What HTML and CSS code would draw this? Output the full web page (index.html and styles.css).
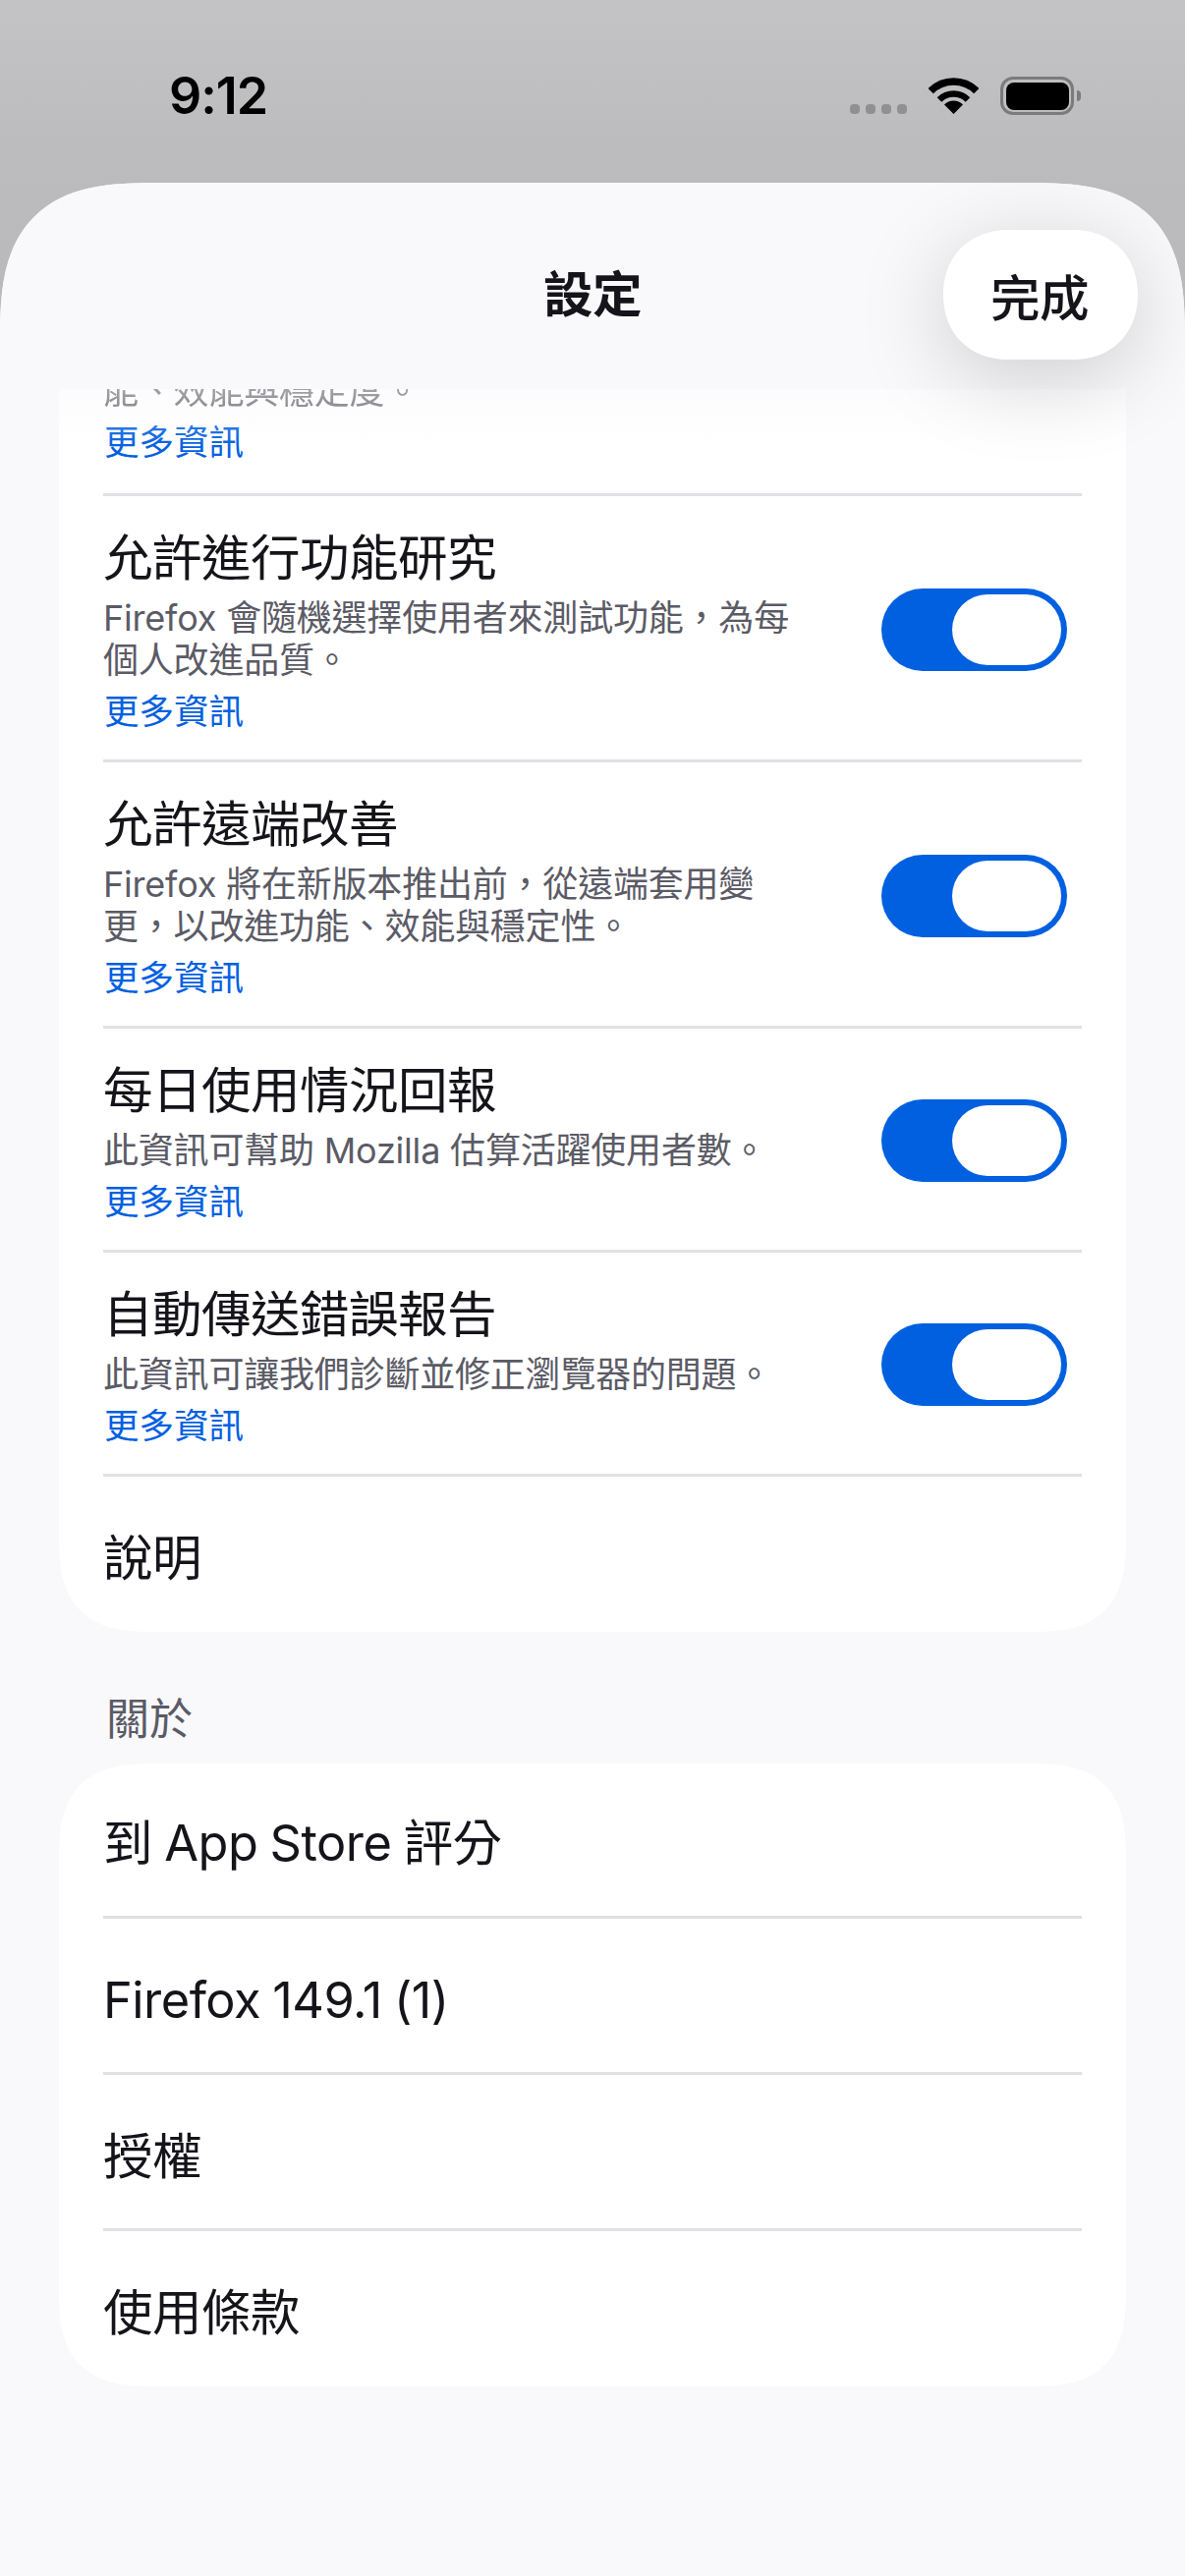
FILE: index.html
```html
<!DOCTYPE html>
<html lang="zh-Hant">
<head>
<meta charset="utf-8">
<title>設定</title>
<link rel="stylesheet" href="styles.css">
</head>
<body>
<div class="phone">
  <div class="status">
    <span class="time">9:12</span>
    <div class="status-icons">
      <div class="signal"><i></i><i></i><i></i><i></i></div>
      <svg class="wifi" viewBox="0 0 51 37" width="51" height="37">
        <path d="M2.2 13.7A33 33 0 0 1 48.8 13.7" fill="none" stroke="#000" stroke-width="7.5"/>
        <path d="M11 22.5A20.5 20.5 0 0 1 40 22.5" fill="none" stroke="#000" stroke-width="6.5"/>
        <path d="M25.5 37L16 27.5A13.4 13.4 0 0 1 35 27.5Z" fill="#000"/>
      </svg>
      <div class="battery"><div class="battery-body"><div class="battery-fill"></div></div><div class="battery-nub"></div></div>
    </div>
  </div>
  <div class="sheet">
    <header class="nav">
      <h1 class="nav-title">設定</h1>
      <button class="done">完成</button>
    </header>
    <div class="nav-fade"></div>
    <main class="scroll">
      <section class="card first">
        <div class="row">
          <div class="text">
            <p class="sub blurred">能、效能與穩定度。</p>
            <a class="link">更多資訊</a>
          </div>
        </div>
        <div class="row split">
          <div class="text">
            <div class="title">允許進行功能研究</div>
            <p class="sub">Firefox 會隨機選擇使用者來測試功能，為每<br>個人改進品質。</p>
            <a class="link">更多資訊</a>
          </div>
          <div class="toggle"><div class="knob"></div></div>
        </div>
        <div class="row split">
          <div class="text">
            <div class="title">允許遠端改善</div>
            <p class="sub">Firefox 將在新版本推出前，從遠端套用變<br>更，以改進功能、效能與穩定性。</p>
            <a class="link">更多資訊</a>
          </div>
          <div class="toggle"><div class="knob"></div></div>
        </div>
        <div class="row split">
          <div class="text">
            <div class="title">每日使用情況回報</div>
            <p class="sub">此資訊可幫助 Mozilla 估算活躍使用者數。</p>
            <a class="link">更多資訊</a>
          </div>
          <div class="toggle"><div class="knob"></div></div>
        </div>
        <div class="row split">
          <div class="text">
            <div class="title">自動傳送錯誤報告</div>
            <p class="sub">此資訊可讓我們診斷並修正瀏覽器的問題。</p>
            <a class="link">更多資訊</a>
          </div>
          <div class="toggle"><div class="knob"></div></div>
        </div>
        <div class="row plain">說明</div>
      </section>
      <h2 class="section-label">關於</h2>
      <section class="card">
        <div class="row plain">到 App Store 評分</div>
        <div class="row plain">Firefox 149.1 (1)</div>
        <div class="row plain">授權</div>
        <div class="row plain">使用條款</div>
      </section>
    </main>
  </div>
</div>
</body>
</html>
```

FILE: styles.css
```css
* { box-sizing: border-box; }
html, body { margin: 0; padding: 0; }
body {
  font-family: Inter, "Noto Sans CJK TC", sans-serif;
  color: #15141a;
}
.phone {
  width: 1206px;
  height: 2622px;
  display: flex;
  flex-direction: column;
  overflow: hidden;
  background: linear-gradient(#c3c3c5 0, #bbbbbd 186px, #b9b9bb 330px);
}
.status {
  height: 186px;
  flex: none;
  display: flex;
  justify-content: space-between;
  padding: 68px 106px 0 172px;
  align-items: flex-start;
}
.time {
  font-size: 52px;
  line-height: 60px;
  font-weight: 600;
  letter-spacing: -1px;
  color: #000;
}
.status-icons {
  display: flex;
  align-items: flex-start;
  padding-top: 10px;
}
.signal {
  display: flex;
  gap: 6px;
  margin-top: 28px;
  margin-right: 22px;
}
.signal i {
  display: block;
  width: 10px;
  height: 10px;
  border-radius: 4px;
  background: #909092;
}
.wifi { display: block; margin-top: 1px; margin-right: 22px; }
.battery { display: flex; align-items: center; }
.battery-body {
  width: 75px;
  height: 39px;
  border: 3.5px solid #7b7b7d;
  border-radius: 13px;
  padding: 2.5px;
}
.battery-fill {
  width: 100%;
  height: 100%;
  background: #000;
  border-radius: 8px;
}
.battery-nub {
  width: 4px;
  height: 11px;
  margin-left: 3px;
  background: #7b7b7d;
  border-radius: 0 4px 4px 0;
}
.sheet {
  flex: 1;
  position: relative;
  background: #f9f9fb;
  border-radius: 160px 160px 0 0;
  corner-shape: superellipse(1.5);
  overflow: hidden;
}
.nav {
  position: absolute;
  top: 0;
  left: 0;
  right: 0;
  height: 210px;
  background: #f9f9fb;
  z-index: 3;
}
.nav-title {
  margin: 0;
  position: absolute;
  left: 0;
  right: 0;
  top: 84px;
  text-align: center;
  font-size: 50.5px;
  letter-spacing: -0.5px;
  line-height: 60px;
  font-weight: 600;
}
.done {
  position: absolute;
  top: 48px;
  right: 48px;
  width: 198px;
  height: 132px;
  border: 0;
  border-radius: 66px;
  corner-shape: superellipse(1.1);
  background: #fff;
  box-shadow: 0 18px 90px rgba(0, 0, 0, 0.18);
  font: inherit;
  font-size: 50.5px;
  letter-spacing: -0.5px;
  font-weight: 500;
  color: #15141a;
  padding: 0 2px 0 0;
}
.nav-fade {
  position: absolute;
  top: 210px;
  left: 0;
  right: 0;
  height: 60px;
  z-index: 2;
  background: linear-gradient(rgba(249, 249, 251, 0.45), rgba(249, 249, 251, 0));
}
.scroll {
  padding: 191px 60px 0;
}
.card {
  background: #fff;
  border-radius: 100px;
  corner-shape: superellipse(1.5);
  padding: 0 45px;
}
.card.first {
  border-radius: 0 0 100px 100px;
}
.row {
  border-top: 3px solid #e0e0e6;
  padding: 33px 0 27px;
}
.row:first-child {
  border-top: 0;
  padding-top: 0;
  padding-bottom: 30px;
}
.split {
  display: flex;
  justify-content: space-between;
  align-items: center;
  padding-right: 15px;
}
.title {
  font-size: 50.5px;
  letter-spacing: -0.5px;
  word-spacing: -1.5px;
  line-height: 60px;
  margin-bottom: 10px;
}
.sub {
  margin: 0 0 10px;
  font-size: 36px;
  letter-spacing: -0.2px;
  line-height: 43px;
  color: #5b5b66;
  white-space: nowrap;
}
.blurred { filter: blur(0.7px); }
.link {
  display: block;
  padding-left: 1px;
  font-size: 35.5px;
  line-height: 42px;
  color: #0060df;
}
.toggle {
  flex: none;
  width: 189px;
  height: 84px;
  margin-bottom: 3px;
  border-radius: 42px;
  background: #0060df;
  padding: 6px;
  display: flex;
  justify-content: flex-end;
}
.knob {
  width: 111px;
  height: 72px;
  border-radius: 36px;
  background: #fff;
}
.plain {
  height: 159px;
  padding: 53px 0 0;
  font-size: 50.5px;
  letter-spacing: -0.5px;
  word-spacing: -1.5px;
  line-height: 60px;
}
.plain:first-child { height: 155px; padding: 51px 0 0; }
.card > .plain:last-child { height: 161px; }
.section-label {
  margin: 0;
  height: 134px;
  padding: 67px 0 0 48px;
  font-size: 44px;
  line-height: 44px;
  font-weight: 400;
  color: #5b5b66;
}
```
